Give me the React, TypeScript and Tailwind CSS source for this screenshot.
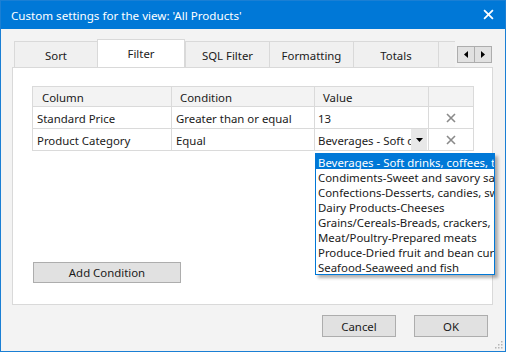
import * as React from "react";

const tabs = ["Sort", "Filter", "SQL Filter", "Formatting", "Totals"];
const tabWidths = [83, 88, 84, 84, 85];

const options = [
  "Beverages - Soft drinks, coffees, teas, beers, and ales",
  "Condiments-Sweet and savory sauces, relishes, spreads, and seasonings",
  "Confections-Desserts, candies, sweet breads",
  "Dairy Products-Cheeses",
  "Grains/Cereals-Breads, crackers, pasta, and cereal",
  "Meat/Poultry-Prepared meats",
  "Produce-Dried fruit and bean curd",
  "Seafood-Seaweed and fish",
];

function CloseIcon({ className }: { className?: string }) {
  return (
    <svg className={className} viewBox="0 0 10 10" fill="none" stroke="currentColor" strokeWidth={1.6}>
      <path d="M1 1l8 8M9 1l-8 8" />
    </svg>
  );
}

export default function App() {
  return (
    <div
      className="relative w-[506px] h-[352px] border border-[#1a7fd4] bg-[#f3f3f3] flex flex-col text-[11.4px] leading-[16px] text-[#1a1a1a] overflow-hidden"
      style={{ fontFamily: '"Noto Sans", "Open Sans", sans-serif' }}
    >
      {/* title bar */}
      <div className="h-[29px] bg-[#0078d7] text-white flex items-center pl-[10px] pr-[10px] -mt-px pt-[2px]">
        <span className="flex-1 text-[11.6px]">Custom settings for the view: 'All Products'</span>
        <CloseIcon className="w-[11px] h-[11px] mr-[1px] -mt-[2px]" />
      </div>

      <div className="flex flex-col px-[11px] pt-[10px]">
        {/* tab strip */}
        <div className="flex items-end h-[28px] relative z-10">
          <div className="ml-[2px] w-[441px] h-[29px] flex items-end overflow-hidden">
            {tabs.map((t, i) =>
              i === 1 ? (
                <div
                  key={t}
                  className="shrink-0 h-[29px] -mb-px bg-white border border-b-0 border-[#d9d9d9] flex items-start justify-center pt-[6px]"
                  style={{ width: tabWidths[i] }}
                >
                  {t}
                </div>
              ) : (
                <div
                  key={t}
                  className="shrink-0 h-[26px] bg-[#f0f0f0] border-t border-l border-[#d9d9d9] flex items-center justify-center pt-[3px]"
                  style={{ width: tabWidths[i] }}
                >
                  {t}
                </div>
              )
            )}
            <div className="shrink-0 w-[30px] h-[26px] bg-[#f0f0f0] border-t border-l border-[#d9d9d9]" />
          </div>
          <div className="ml-[2px] mb-[4px] flex self-end">
            <div className="w-[18px] h-[17px] border border-[#adadad] bg-[#e1e1e1] flex items-center justify-center">
              <svg width="4" height="7" viewBox="0 0 4 7"><path d="M4 0v7L0 3.5z" fill="#000" /></svg>
            </div>
            <div className="w-[18px] h-[17px] -ml-px border border-[#adadad] bg-[#e1e1e1] flex items-center justify-center">
              <svg width="4" height="7" viewBox="0 0 4 7"><path d="M0 0v7l4-3.5z" fill="#000" /></svg>
            </div>
          </div>
        </div>

        {/* panel */}
        <div className="w-[481px] h-[238px] border border-[#d9d9d9] bg-white flex flex-col pl-[19px] pt-[18px]">
          <div className="w-[442px] border border-[#dadada]">
            <div className="flex h-[20px] bg-[#f3f3f3] border-b border-[#dadada]">
              <div className="w-[139px] border-r border-[#dadada] pl-[9px] pt-[2px] flex items-center">Column</div>
              <div className="w-[143px] border-r border-[#dadada] pl-[8px] pt-[2px] flex items-center">Condition</div>
              <div className="w-[114px] border-r border-[#dadada] pl-[8px] pt-[2px] flex items-center">Value</div>
              <div className="flex-1" />
            </div>
            <div className="flex h-[22px] border-b border-[#dadada]">
              <div className="w-[139px] border-r border-[#dadada] pl-[4px] pt-[2px] flex items-center">Standard Price</div>
              <div className="w-[143px] border-r border-[#dadada] pl-[4px] pt-[2px] flex items-center">Greater than or equal</div>
              <div className="w-[114px] border-r border-[#dadada] pl-[3px] pt-[2px] flex items-center">13</div>
              <div className="flex-1 flex items-center justify-center text-[#8a8a8a]">
                <CloseIcon className="w-[10px] h-[10px]" />
              </div>
            </div>
            <div className="flex h-[21px]">
              <div className="w-[139px] border-r border-[#dadada] pl-[4px] pt-[2px] flex items-center">Product Category</div>
              <div className="w-[143px] border-r border-[#dadada] pl-[4px] pt-[2px] flex items-center">Equal</div>
              <div className="w-[114px] border-r border-[#dadada] pl-[3px] flex items-center">
                <span className="w-[93px] pt-[2px] overflow-hidden whitespace-nowrap">Beverages - Soft drinks</span>
                <div className="w-[16px] h-[21px] bg-[#e8e8e8] flex items-center justify-center">
                  <svg width="7" height="4" viewBox="0 0 7 4"><path d="M0 0h7L3.5 4z" fill="#000" /></svg>
                </div>
              </div>
              <div className="flex-1 flex items-center justify-center text-[#8a8a8a]">
                <CloseIcon className="w-[10px] h-[10px]" />
              </div>
            </div>
          </div>

          <button className="mt-[111px] ml-[1px] w-[148px] h-[21px] border border-[#adadad] bg-[#e1e1e1] flex items-center justify-center pt-[1px]">
            Add Condition
          </button>
        </div>

        {/* footer */}
        <div className="flex justify-end gap-[18px] pt-[10px] pr-[6px]">
          <button className="w-[74px] h-[22px] border border-[#adadad] bg-[#e1e1e1] flex items-center justify-center pt-[1px]">
            Cancel
          </button>
          <button className="w-[74px] h-[22px] border border-[#adadad] bg-[#e1e1e1] flex items-center justify-center pt-[1px]">
            OK
          </button>
        </div>
      </div>

      {/* resize grip */}
      <svg className="absolute right-[2px] bottom-[2px]" width="9" height="9" viewBox="0 0 9 9" fill="#b5b5b5">
        <rect x="7" y="1" width="1.5" height="1.5" />
        <rect x="4" y="4" width="1.5" height="1.5" />
        <rect x="7" y="4" width="1.5" height="1.5" />
        <rect x="1" y="7" width="1.5" height="1.5" />
        <rect x="4" y="7" width="1.5" height="1.5" />
        <rect x="7" y="7" width="1.5" height="1.5" />
      </svg>

      {/* open dropdown list */}
      <div className="absolute left-[314px] top-[152px] w-[180px] h-[122px] border border-[#0078d7] bg-white shadow-[3px_3px_3px_rgba(0,0,0,0.3)] overflow-hidden flex flex-col">
        {options.map((o, i) => (
          <div
            key={o}
            className={
              "h-[15px] pl-[2px] pt-[1px] whitespace-nowrap leading-[15px] " +
              (i === 0 ? "bg-[#0078d7] text-white" : "")
            }
          >
            {o}
          </div>
        ))}
      </div>
    </div>
  );
}
